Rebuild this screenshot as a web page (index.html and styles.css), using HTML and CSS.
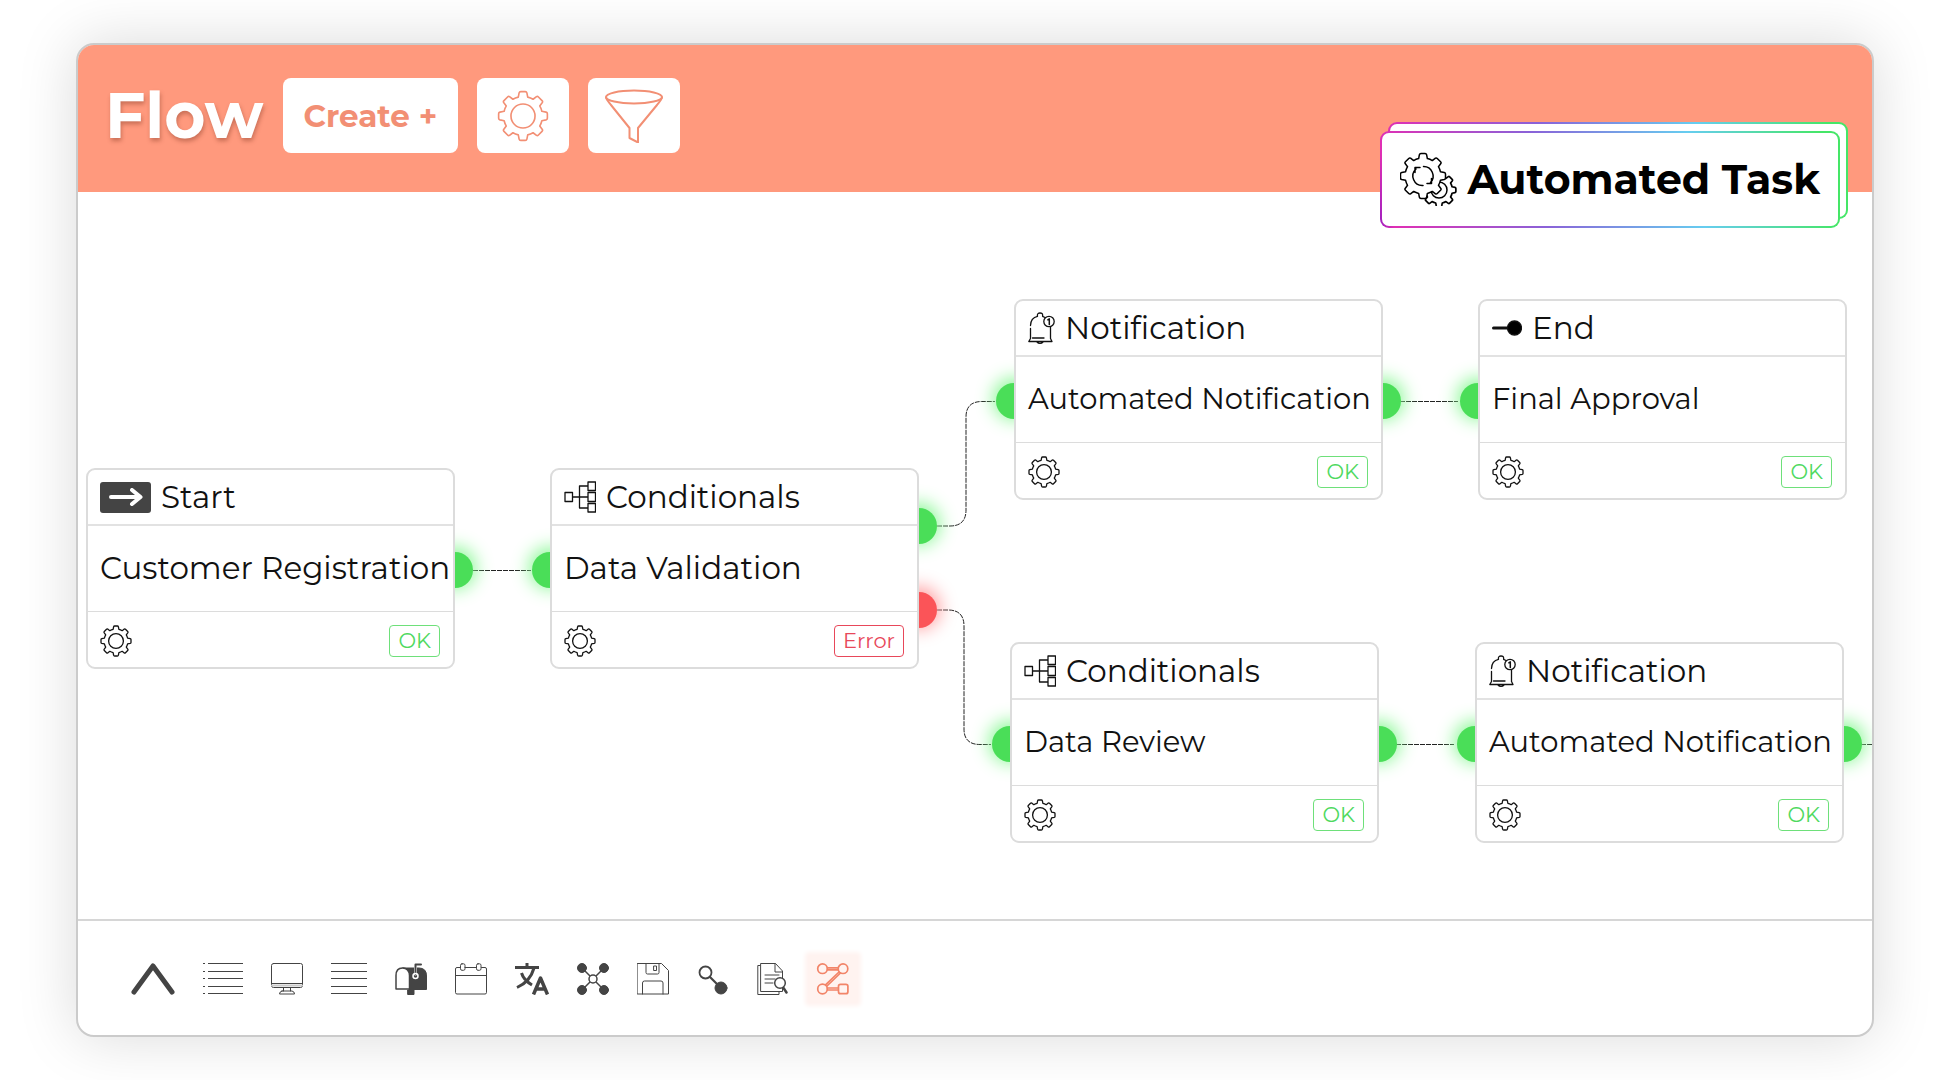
FILE: index.html
```html
<!DOCTYPE html>
<html lang="en">
<head>
<meta charset="utf-8">
<meta name="viewport" content="width=device-width, initial-scale=1">
<title>Flow</title>
<link rel="stylesheet" href="styles.css">
</head>
<body>
<svg class="sprite" aria-hidden="true">
  <symbol id="gear-outline" viewBox="-16 -16 32 32">
    <path d="M-2.9-11.6L-2.4-14.2Q-2.2-15-1.4-15H1.4Q2.2-15 2.4-14.2L2.9-11.6Q4.7-11.2 6.2-10.3L8.3-11.9Q8.9-12.3 9.5-11.7L11.7-9.5Q12.3-8.9 11.9-8.3L10.3-6.2Q11.2-4.7 11.6-2.9L14.2-2.4Q15-2.2 15-1.4V1.4Q15 2.2 14.2 2.4L11.6 2.9Q11.2 4.7 10.3 6.2L11.9 8.3Q12.3 8.9 11.7 9.5L9.5 11.7Q8.9 12.3 8.3 11.9L6.2 10.3Q4.7 11.2 2.9 11.6L2.4 14.2Q2.2 15 1.4 15H-1.4Q-2.2 15-2.4 14.2L-2.9 11.6Q-4.7 11.2-6.2 10.3L-8.3 11.9Q-8.9 12.3-9.5 11.7L-11.7 9.5Q-12.3 8.9-11.9 8.3L-10.3 6.2Q-11.2 4.7-11.6 2.9L-14.2 2.4Q-15 2.2-15 1.4V-1.4Q-15-2.2-14.2-2.4L-11.6-2.9Q-11.2-4.7-10.3-6.2L-11.9-8.3Q-12.3-8.9-11.7-9.5L-9.5-11.7Q-8.9-12.3-8.3-11.9L-6.2-10.3Q-4.7-11.2-2.9-11.6Z"/>
  </symbol>
  <symbol id="gear" viewBox="-16 -16 32 32">
    <use href="#gear-outline" x="-16" y="-16" width="32" height="32"/>
    <circle r="7.4"/>
  </symbol>
  <symbol id="branch" viewBox="0 0 32 32">
    <path d="M1 11.5h7.500v9H1zM24 1h7.500v8.500H24zM24 11.500h7.500v9H24zM24 22.500h7.500v8.500H24zM8.500 16H24M24 5H15.500V27H24"/>
  </symbol>
  <symbol id="bell" viewBox="0 0 27 32">
    <path d="M2.500 16.500V26.500M2.500 13.500C2.700 8 6 5 9.500 4.300 9 1.500 10.500 1 12 1s3 .5 2.600 3.300L17 5.500M22.500 15V26.500M4.500 26H16M2.500 26.500L.8 29.500H24L22.500 26.500M9 30c1.500 1.800 4.500 1.800 6 0"/>
    <circle cx="21" cy="9.500" r="5.200"/>
    <path d="M19.800 7.800l1.500-1v5.700" stroke-width="1.500"/>
  </symbol>
</svg>

<main class="window">
  <header class="topbar">
    <h1 class="title">Flow</h1>
    <div class="actions">
      <button class="btn" type="button">Create +</button>
      <button class="btn btn-icon" type="button" aria-label="Settings"><svg width="52" height="52"><use href="#gear"/></svg></button>
      <button class="btn btn-icon" type="button" aria-label="Filter">
        <svg width="58" height="54" viewBox="0 0 58 54"><ellipse cx="29" cy="8" rx="28" ry="6.500"/><path d="M1 8.500C2 12 4 13 6 16L24.500 39V49L33 53.500V39L52 16C54 13 56 12 57 8.500"/></svg>
      </button>
    </div>
    <div class="badge">
      <svg width="58" height="54" viewBox="0 0 58 54" aria-hidden="true">
        <use href="#gear-outline" x="21" y="20" width="36" height="36"/>
        <circle cx="39" cy="38" r="8"/>
        <use class="cover" href="#gear-outline" x="-1" y="0" width="48" height="48"/>
        <path d="M23 33.500A9.500 9.500 0 0 1 16 17M15 20.500V15.500H20M23.500 14.500A9.500 9.500 0 0 1 30.500 30.500M31.500 26.500V31.500H27"/>
      </svg>
      <span>Automated Task</span>
    </div>
  </header>

  <section class="canvas" aria-label="Workflow">
    <svg class="wires" aria-hidden="true">
      <path d="M395 378.500H453"/>
      <path d="M859 334H872Q888 334 888 318V225Q888 209.500 904 209.500H917"/>
      <path d="M859 418H870Q886 418 886 434V537Q886 552.500 902 552.500H913"/>
      <path d="M1322 209.500H1380M1318 552.500H1376M1777 552.500H1795"/>
    </svg>

    <article class="node start">
      <i class="port out"></i>
      <h2 class="node-head"><span class="arrow"><svg width="34" height="18" viewBox="0 0 34 18"><path d="M2 9H31M23 2L31.500 9L23 16"/></svg></span>Start</h2>
      <p class="node-body wide">Customer Registration</p>
      <div class="node-foot"><button class="gear" type="button" aria-label="Configure"><svg width="32" height="32"><use href="#gear"/></svg></button><span class="tag">OK</span></div>
    </article>

    <article class="node validation">
      <i class="port in"></i><i class="port out upper"></i><i class="port out lower"></i>
      <h2 class="node-head"><svg width="32" height="32"><use href="#branch"/></svg>Conditionals</h2>
      <p class="node-body wide">Data Validation</p>
      <div class="node-foot"><button class="gear" type="button" aria-label="Configure"><svg width="32" height="32"><use href="#gear"/></svg></button><span class="tag error">Error</span></div>
    </article>

    <article class="node notify">
      <i class="port in"></i><i class="port out"></i>
      <h2 class="node-head"><svg width="27" height="32"><use href="#bell"/></svg>Notification</h2>
      <p class="node-body">Automated Notification</p>
      <div class="node-foot"><button class="gear" type="button" aria-label="Configure"><svg width="32" height="32"><use href="#gear"/></svg></button><span class="tag">OK</span></div>
    </article>

    <article class="node end">
      <i class="port in"></i>
      <h2 class="node-head"><svg width="30" height="16" viewBox="0 0 30 16"><path d="M1.500 8H20" stroke-width="3"/><circle cx="22.500" cy="8" r="7" fill="#000"/></svg>End</h2>
      <p class="node-body">Final Approval</p>
      <div class="node-foot"><button class="gear" type="button" aria-label="Configure"><svg width="32" height="32"><use href="#gear"/></svg></button><span class="tag">OK</span></div>
    </article>

    <article class="node review">
      <i class="port in"></i><i class="port out"></i>
      <h2 class="node-head"><svg width="32" height="32"><use href="#branch"/></svg>Conditionals</h2>
      <p class="node-body">Data Review</p>
      <div class="node-foot"><button class="gear" type="button" aria-label="Configure"><svg width="32" height="32"><use href="#gear"/></svg></button><span class="tag">OK</span></div>
    </article>

    <article class="node notify-review">
      <i class="port in"></i><i class="port out"></i>
      <h2 class="node-head"><svg width="27" height="32"><use href="#bell"/></svg>Notification</h2>
      <p class="node-body">Automated Notification</p>
      <div class="node-foot"><button class="gear" type="button" aria-label="Configure"><svg width="32" height="32"><use href="#gear"/></svg></button><span class="tag">OK</span></div>
    </article>
  </section>

  <nav class="toolbar" aria-label="Tools">
    <button type="button" aria-label="Expand"><svg width="44" height="32" viewBox="0 0 44 32"><path d="M3 29L22 3L41 29" stroke-width="5"/></svg></button>
    <button type="button" aria-label="List"><svg width="40" height="32" viewBox="0 0 40 32"><path d="M5 .5H40M5 8.500H40M5 15.500H40M5 23.500H40M5 30.500H40M0 .5H2M0 8.500H2M0 15.500H2M0 23.500H2M0 30.500H2" stroke-linecap="butt"/></svg></button>
    <button type="button" aria-label="Screen"><svg width="32" height="32" viewBox="0 0 32 32"><rect x=".5" y=".5" width="31" height="24" rx="2"/><path d="M1 22.500H31" stroke="#ccc" stroke-width="2"/><path d="M1 20.500H31M12.500 25v3M19.500 25v3M11 28H21Q23.500 28.500 23.500 31H8.500Q8.500 28.500 11 28Z"/></svg></button>
    <button type="button" aria-label="Lines"><svg width="36" height="32" viewBox="0 0 36 32"><path d="M0 .5H36M0 8.500H36M0 15.500H36M0 23.500H36M0 30.500H36" stroke-linecap="butt"/></svg></button>
    <button type="button" aria-label="Mailbox"><svg width="32" height="32" viewBox="0 0 32 32"><path d="M8 5H24Q31.500 5 31.500 13V26.500H14V13Q14 5 8 5Z" fill="#444"/><path d="M1 26V12.500Q1 5 7.500 5T14.500 12.500V26Z" fill="#fff" stroke-width="1.500"/><path d="M13 27H19V31.500H13Z" fill="#444"/><path d="M20.500 11V3" stroke="#fff" stroke-width="3"/><path d="M20.500 11V1.500H26" stroke-width="2"/><circle cx="20.500" cy="13" r="2.500" stroke="#fff" stroke-width="1.500"/></svg></button>
    <button type="button" aria-label="Calendar"><svg width="32" height="32" viewBox="0 0 32 32"><path d="M5.500 4.500H2Q.5 4.500 .5 6V29.500Q.5 31 2 31H30Q31.500 31 31.500 29.500V6Q31.500 4.500 30 4.500H26.500M10 4.500H21.500M.5 12.500H31.500"/><rect x="5.500" y=".8" width="4.500" height="6.500" rx="1.500"/><rect x="21.500" y=".8" width="4.500" height="6.500" rx="1.500"/></svg></button>
    <button type="button" aria-label="Translate"><svg width="34" height="32" viewBox="0 0 34 32"><path d="M0 4.500H24M12 0V4M19 5C16.500 14 10 21 2 24.500M6.500 10C8 15 12 19 17 22" stroke-width="3" stroke-linecap="butt"/><path d="M18.500 31.500L25.500 15L32.500 31.500M21 26H30" stroke-width="3.500" stroke-linecap="butt"/></svg></button>
    <button type="button" aria-label="Network"><svg width="32" height="32" viewBox="0 0 32 32"><path d="M5 5L27 27M27 5L5 27" stroke-width="1.500"/><g fill="#444"><circle cx="5" cy="5" r="4.500"/><circle cx="27" cy="5" r="4.500"/><circle cx="5" cy="27" r="4.500"/><circle cx="27" cy="27" r="4.500"/></g><circle cx="16" cy="16" r="4" fill="#fff" stroke-width="1.500"/></svg></button>
    <button type="button" aria-label="Save"><svg width="32" height="32" viewBox="0 0 32 32"><path d="M.5 .5H24.500L31.500 7.500V31H.5ZM9 .5V9.500Q9 11 10.500 11H20.500Q22 11 22 9.500V.5M5.500 31V20Q5.500 18 7.500 18H24Q26 18 26 20V31M17 3H19.500V7.500H17Z"/></svg></button>
    <button type="button" aria-label="Link"><svg width="32" height="32" viewBox="0 0 32 32"><circle cx="8.500" cy="9.500" r="6" stroke-width="1.800"/><path d="M13 14L20 21" stroke-width="2.200"/><circle cx="24" cy="25" r="6" fill="#444"/></svg></button>
    <button type="button" aria-label="Search document"><svg width="31" height="32" viewBox="0 0 31 32"><path d="M3 2.500H.8V31.500H22V29M4 .5H18.500L25.500 8V28.500H4ZM18 .5V9H25M8 12H22M8 16H18M8 20H16"/><circle cx="23" cy="20" r="5.300" fill="#fff" stroke-width="1.500"/><path d="M26.500 25L29.500 29.500" stroke-width="2.500"/></svg></button>
    <button class="active" type="button" aria-label="Flow" aria-current="page"><svg width="34" height="32" viewBox="0 0 34 32"><g stroke-width="1.700"><circle cx="6.500" cy="5.700" r="4.800"/><circle cx="27" cy="5.700" r="4.800"/><circle cx="6.500" cy="26" r="4.800"/><rect x="22.500" y="21.300" width="9.400" height="9.400" rx="2"/><path d="M11.500 4.800H22M11.500 6.800H22M11.500 25H22M11.500 27H22M23 9L9.500 21.800M24.500 10L11 23"/></g></svg></button>
  </nav>
</main>
</body>
</html>
```
FILE: styles.css
```css
* {
  box-sizing: border-box;
}

body {
  margin: 0;
  min-height: 100vh;
  padding: 43px 76px;
  display: flex;
  background: #fff;
  color: #111;
  font-family: Montserrat, Inter, "Open Sans", sans-serif;
}

h1,
h2,
p {
  margin: 0;
}

button {
  border: 0;
  padding: 0;
  background: none;
  color: inherit;
  font: inherit;
  cursor: pointer;
}

svg {
  display: block;
  flex: none;
  fill: none;
  stroke: currentColor;
  stroke-linecap: round;
  stroke-linejoin: round;
}

.sprite {
  position: absolute;
  width: 0;
  height: 0;
}

.window {
  flex: 1;
  min-width: 0;
  display: flex;
  flex-direction: column;
  border: 2px solid #cbcbcb;
  border-radius: 18px;
  background: #fff;
  box-shadow: 0 0 60px rgba(0, 0, 0, 0.15);
}

/* Top bar */

.topbar {
  position: relative;
  z-index: 1;
  display: flex;
  align-items: center;
  gap: 19px;
  padding: 33px 27px 39px;
  border-radius: 16px 16px 0 0;
  background: #ff997d;
}

.title {
  color: #fff;
  font-size: 63px;
  line-height: 72px;
  font-weight: 700;
  text-shadow: 1px 3px 4px rgba(120, 50, 30, 0.4);
}

.actions {
  display: flex;
  gap: 19px;
}

.btn {
  display: flex;
  align-items: center;
  justify-content: center;
  height: 75px;
  padding: 0 21px;
  border-radius: 8px;
  background: #fff;
  color: #f28f74;
  font-size: 31px;
  font-weight: 700;
}

.btn-icon {
  width: 92px;
  padding: 0;
}

.btn-icon svg {
  stroke-width: 1;
}

.btn-icon svg[viewBox] {
  stroke-width: 2;
}

.badge {
  position: absolute;
  top: 86px;
  right: 32px;
  display: flex;
  align-items: center;
  gap: 9px;
  height: 97px;
  padding: 0 20px 2px;
  color: #000;
  font-size: 41px;
  font-weight: 700;
  white-space: nowrap;
}

.badge::before,
.badge::after {
  content: "";
  position: absolute;
  z-index: -1;
  inset: 0;
  border: 2px solid transparent;
  border-radius: 9px;
  background:
    linear-gradient(#fff, #fff) padding-box,
    linear-gradient(80deg, #9a1fc0, #e02fb4 3%, #8a62d8 35%, #66cdf0 68%, #45e667 96%) border-box;
}

.badge::before {
  inset: -9px -8px 9px 8px;
}

.badge svg {
  stroke-width: 1.5;
}

.badge .cover {
  fill: #fff;
  stroke-width: 1;
}

/* Canvas */

.canvas {
  position: relative;
  isolation: isolate;
  flex: 1;
  min-height: 720px;
  overflow: hidden;
}

.wires {
  position: absolute;
  z-index: -2;
  inset: 0;
  width: 100%;
  height: 100%;
  stroke: #222;
  stroke-width: 1;
  stroke-dasharray: 5 1;
  stroke-linecap: butt;
}

.node {
  position: absolute;
  width: 369px;
  border: 2px solid #dcdcdc;
  border-radius: 9px;
  background: #fff;
}

.start { left: 8px; top: 276px; }
.validation { left: 472px; top: 276px; }
.notify { left: 936px; top: 107px; }
.end { left: 1400px; top: 107px; }
.review { left: 932px; top: 450px; }
.notify-review { left: 1397px; top: 450px; }

.port {
  position: absolute;
  z-index: -1;
  top: 82px;
  width: 36px;
  height: 36px;
  border-radius: 50%;
  background: #4ade58;
  box-shadow: 0 -2px 18px 3px #8bf796;
}

.in { left: -20px; }
.out { right: -20px; }
.upper { top: 38px; }

.lower {
  top: 122px;
  background: #fb5458;
  box-shadow: 0 -2px 18px 3px #ff9c9e;
}

.node-head,
.node-body,
.node-foot {
  display: flex;
  align-items: center;
  padding: 0 12px;
  font-size: 31px;
  font-weight: 400;
  white-space: nowrap;
}

.node-head {
  gap: 10px;
  height: 56px;
  border-bottom: 2px solid #e2e2e2;
}

.node-head svg {
  stroke-width: 1.3;
}

.node-body {
  height: 85px;
  padding-bottom: 3px;
  font-size: 29px;
}

.node-body.wide {
  padding-bottom: 1px;
  font-size: 31px;
}

.node-foot {
  justify-content: space-between;
  height: 56px;
  padding: 3px 13px 0 12px;
  border-top: 1px solid #dcdcdc;
}

.gear svg {
  stroke-width: 1.3;
}

.arrow {
  display: flex;
  align-items: center;
  justify-content: center;
  width: 51px;
  height: 31px;
  border-radius: 3px;
  background: #444;
  color: #fff;
}

.node-head .arrow svg {
  stroke-width: 4;
}

.tag {
  padding: 0 8px;
  border: 1px solid #6ee07a;
  border-radius: 4px;
  color: #4fd95f;
  font-size: 21px;
  line-height: 30px;
}

.tag.error {
  border-color: #e8485a;
  color: #e8485a;
}

/* Bottom toolbar */

.toolbar {
  display: flex;
  align-items: center;
  gap: 28px;
  height: 116px;
  padding: 2px 53px 0;
  border-top: 2px solid #d6d6d6;
  color: #444;
}

.toolbar .active {
  border-radius: 1px;
  background: #fff3f0;
  box-shadow: 0 0 4px 11px #fff3f0;
  color: #f28468;
}
```
